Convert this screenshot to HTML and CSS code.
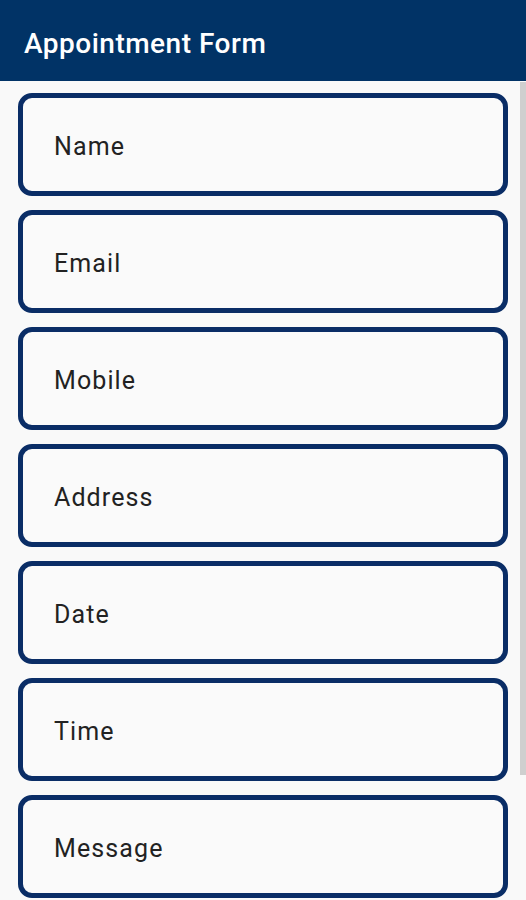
FILE: index.html
```html
<!DOCTYPE html>
<html lang="en">
<head>
    <meta charset="UTF-8">
    <meta name="viewport" content="width=device-width, initial-scale=1.0">
    <title>Appointment Form</title>
    <link rel="stylesheet" href="styles.css">
</head>
<body>
    <header class="toolbar">
        <h1>Appointment Form</h1>
    </header>
    <div class="scroll-thumb"></div>
    <form class="form">
        <input class="field" type="text" placeholder="Name">
        <input class="field" type="email" placeholder="Email">
        <input class="field" type="tel" placeholder="Mobile">
        <input class="field" type="text" placeholder="Address">
        <input class="field" type="text" placeholder="Date">
        <input class="field" type="text" placeholder="Time">
        <input class="field" type="text" placeholder="Message">
    </form>
</body>
</html>
```

FILE: styles.css
```css
body {
    font-family: Roboto, 'Noto Sans', sans-serif;
    background: #f9f9f9;
    margin: 0;
    padding: 0;
    overflow: hidden;
    height: 900px;
}
.toolbar {
    background: #013366;
    height: 81px;
    display: flex;
    align-items: center;
    padding: 0 24px;
    box-sizing: border-box;
}
.toolbar h1 {
    margin: 0;
    color: #fff;
    font-size: 28px;
    font-weight: 500;
    letter-spacing: 0.5px;
    padding-top: 5px;
}
.form {
    display: flex;
    flex-direction: column;
    gap: 14px;
    padding: 12px 18px 0;
}
.field {
    box-sizing: border-box;
    width: 490px;
    height: 103px;
    border: 5.5px solid #0a2d66;
    border-radius: 14px;
    background: #fafafa;
    padding: 3px 0 0 31px;
    font-family: Roboto, sans-serif;
    font-size: 25px;
    letter-spacing: 1.1px;
    color: #222;
    outline: none;
}
.field::placeholder {
    color: #222;
    opacity: 1;
}
/* scrollbar thumb drawn over the content */
.scroll-thumb {
    position: absolute;
    top: 82px;
    right: 0;
    width: 6px;
    height: 693px;
    background: #cfcfcf;
}
```
